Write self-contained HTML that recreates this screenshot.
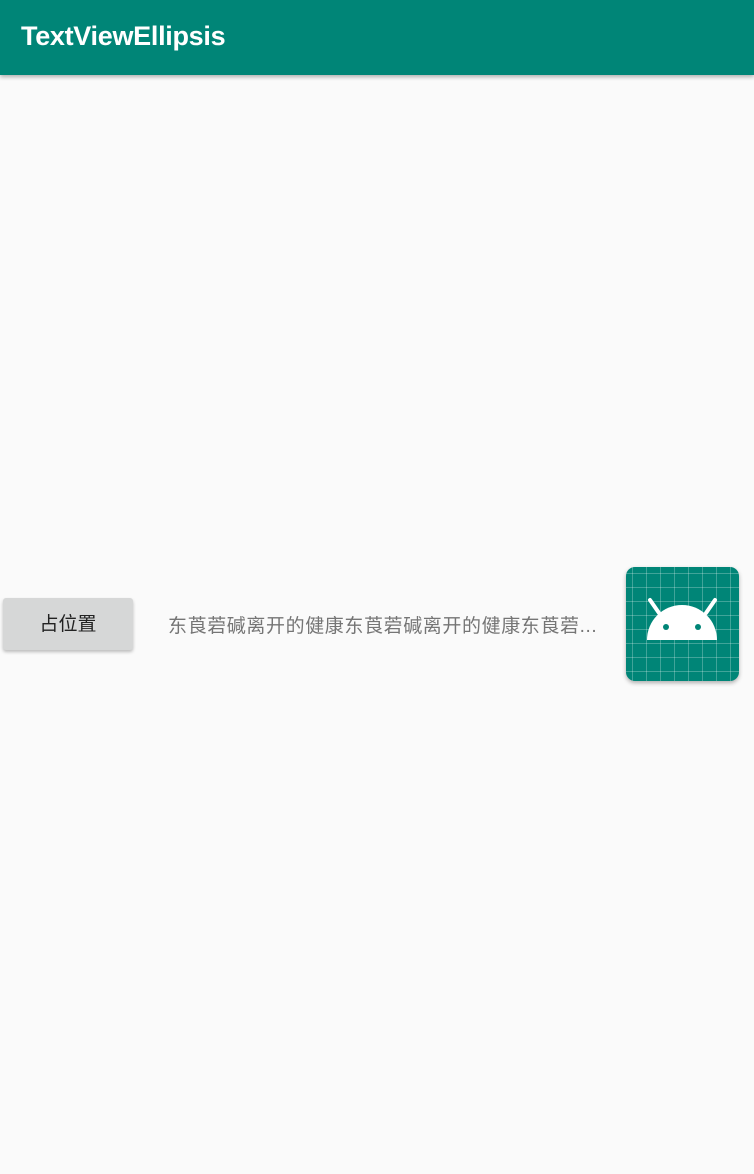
<!DOCTYPE html>
<html><head><meta charset="utf-8"><style>
body{margin:0;width:754px;height:1174px;background:#fafafa;position:relative;overflow:hidden;font-family:"Liberation Sans","Noto Sans CJK SC",sans-serif}
.bar{position:absolute;left:0;top:0;width:754px;height:75px;background:#008577;box-shadow:0 2px 4px rgba(0,0,0,.3)}
.bar span{position:absolute;left:21px;top:21px;color:#fff;font-size:27px;font-weight:bold;letter-spacing:-0.3px}
.btn{position:absolute;left:3px;top:598px;width:130px;height:52px;background:#d6d7d7;border-radius:3px;box-shadow:0 2px 3px rgba(0,0,0,.25);text-align:center;line-height:54px;font-size:19px;color:#222}
.txt{position:absolute;left:168px;top:611px;font-size:19px;letter-spacing:0.6px;color:#757575;white-space:nowrap}
.icon{position:absolute;left:626px;top:567px;width:113px;height:114px;border-radius:9px;background:#008577;box-shadow:0 2px 4px rgba(0,0,0,.3);overflow:hidden;
background-image:linear-gradient(rgba(255,255,255,.25) 1px,transparent 1px),linear-gradient(90deg,rgba(255,255,255,.25) 1px,transparent 1px);background-size:14px 14px;background-position:6px 6px}
</style></head><body>
<div class="bar"><span>TextViewEllipsis</span></div>
<div class="btn">占位置</div>
<div class="txt">东莨菪碱离开的健康东莨菪碱离开的健康东莨菪...</div>
<div class="icon"><svg width="113" height="114" viewBox="0 0 113 114">
<path d="M21 73 A35 35 0 0 1 91 73 Z" fill="#fff"/>
<line x1="33" y1="46" x2="24" y2="33" stroke="#fff" stroke-width="4" stroke-linecap="round"/>
<line x1="80" y1="46" x2="89" y2="33" stroke="#fff" stroke-width="4" stroke-linecap="round"/>
<circle cx="40" cy="60" r="3" fill="#008577"/><circle cx="72" cy="60" r="3" fill="#008577"/>
</svg></div>
</body></html>
